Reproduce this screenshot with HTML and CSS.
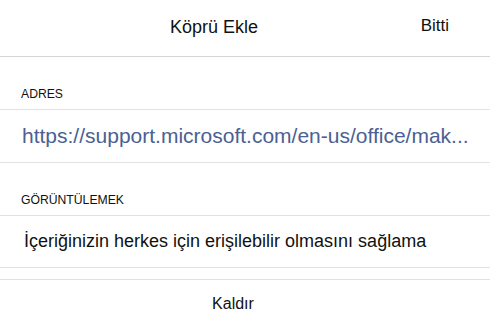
FILE: index.html
```html
<!DOCTYPE html>
<html>
<head>
<meta charset="utf-8">
<link rel="stylesheet" href="styles.css">
</head>
<body>
<div class="sheet">
  <header class="nav">
    <div class="nav-title">Köprü Ekle</div>
    <div class="nav-done">Bitti</div>
  </header>
  <div class="section-label">ADRES</div>
  <div class="row row-url">https://support.microsoft.com/en-us/office/mak...</div>
  <div class="section-label">GÖRÜNTÜLEMEK</div>
  <div class="row row-text">İçeriğinizin herkes için erişilebilir olmasını sağlama</div>
  <div class="spacer"></div>
  <div class="remove">Kaldır</div>
</div>
</body>
</html>
```

FILE: styles.css
```css
html, body {
  margin: 0;
  padding: 0;
  background: #ffffff;
}
body {
  font-family: "Liberation Sans", Arial, sans-serif;
  color: #111111;
}
.sheet {
  width: 490px;
  height: 327px;
  overflow: hidden;
}
.nav {
  height: 56px;
  display: flex;
  align-items: center;
  border-bottom: 1px solid #d6d6d6;
  box-sizing: content-box;
}
.nav-title {
  margin-left: 170px;
  font-size: 18px;
  padding-bottom: 2px;
}
.nav-done {
  margin-left: auto;
  margin-right: 41px;
  font-size: 17px;
  padding-bottom: 4px;
}
.section-label {
  height: 53px;
  box-sizing: border-box;
  display: flex;
  align-items: flex-end;
  padding: 0 0 8px 21px;
  font-size: 12.2px;
  border-bottom: 1px solid #e2e2e2;
}
.row {
  height: 53px;
  box-sizing: border-box;
  display: flex;
  align-items: center;
  border-bottom: 1px solid #e2e2e2;
  white-space: nowrap;
}
.row-url {
  padding-left: 22px;
  font-size: 21px;
  color: #4a6192;
}
.row-text {
  height: 52px;
  padding-left: 24px;
  font-size: 18px;
  color: #111111;
}
.spacer {
  height: 11px;
  border-bottom: 1px solid #e2e2e2;
}
.remove {
  height: 47px;
  display: flex;
  align-items: center;
  justify-content: center;
  padding-right: 24px;
  padding-bottom: 2px;
  font-size: 16px;
}
```
